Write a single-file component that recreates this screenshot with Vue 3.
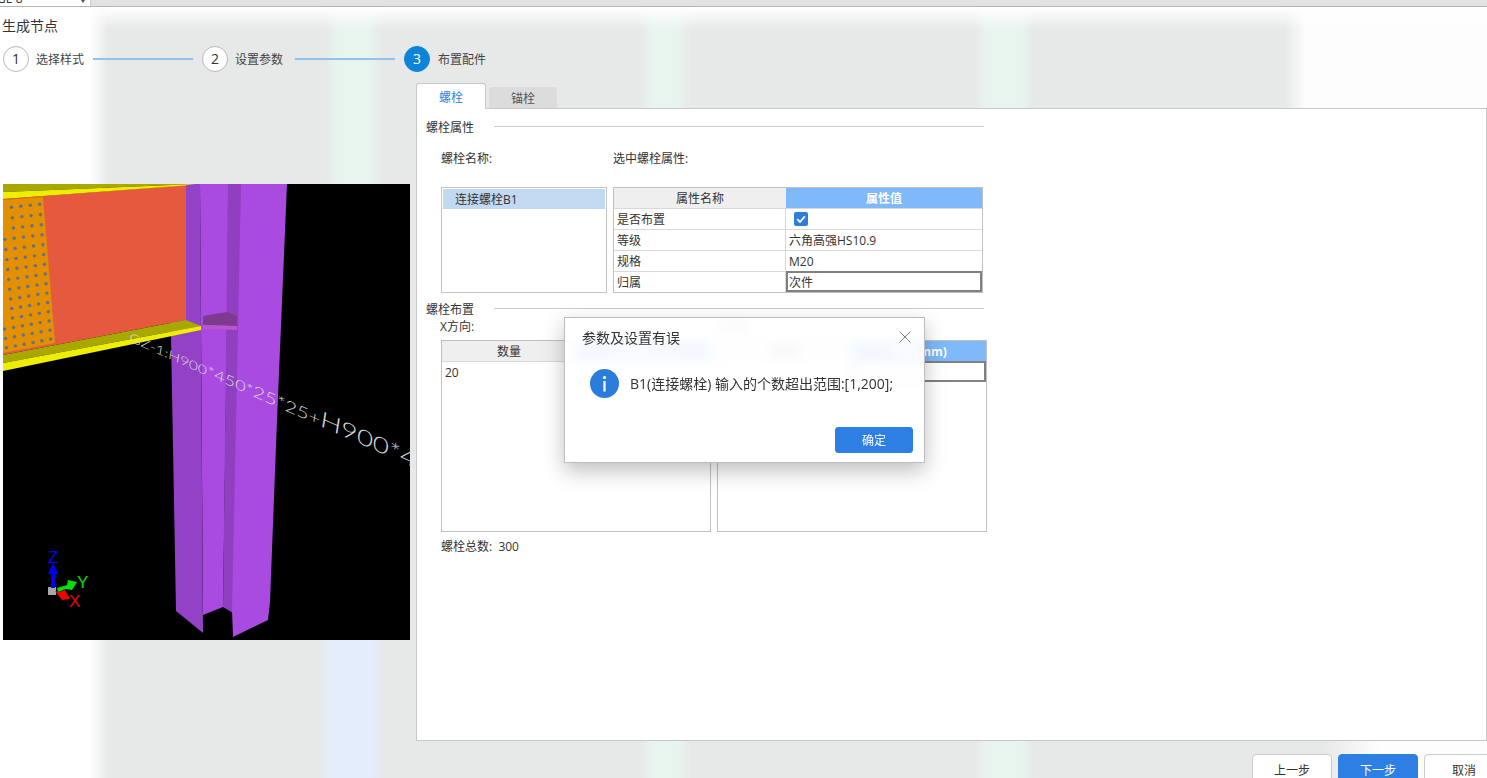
<template>
  <div class="page">
    <div class="top-bar">
      <div class="top-select">
        <span class="top-select-text">GL-8</span>
        <span class="top-caret"></span>
      </div>
    </div>

    <div class="title">生成节点</div>

    <div class="steps">
      <template v-for="(s, i) in steps" :key="s.label">
        <div class="step-num" :class="{ active: s.active }">{{ i + 1 }}</div>
        <div class="step-label">{{ s.label }}</div>
        <div v-if="i < steps.length - 1" class="step-line"></div>
      </template>
    </div>

    <div class="main">
      <div class="viewer-col">
        <svg class="viewer" viewBox="3 184 407 456" width="407" height="456">
          <rect x="3" y="184" width="407" height="456" fill="#000" />
          <!-- column -->
          <polygon points="170,184 200,184 203,633 176,611 171,337" fill="#9341c6" />
          <polygon points="200,184 229,184 223,607 203,615" fill="#a94ae0" />
          <polygon points="228,184 242,184 233,613 223,607" fill="#8f3fc0" />
          <polygon points="241,184 287,184 277,420 270,602 268,620 233,637 232,610" fill="#a94ae0" />
          <!-- notch -->
          <polygon points="203,316 227,312 237,316 237,326 203,325" fill="#7d3a8e" />
          <polygon points="203,325 237,326 237,330 203,329" fill="#b855d0" />
          <!-- beam -->
          <polygon points="3,199 186,185 186,320 3,355" fill="#e55a3f" />
          <polygon points="3,200 43,197 55,343 3,353" fill="#e28f00" />
          <circle v-for="(d, i) in dots" :key="i" :cx="d.x" :cy="d.y" r="1.7" fill="#60708c" />
          <polygon points="3,184 195,184 3,192" fill="#a8a800" />
          <polygon points="3,192 195,184 185,185.5 3,199" fill="#eeee00" />
          <polygon points="3,355 186,320 201,326 3,363" fill="#a8a800" />
          <polygon points="3,363 201,326 201,330 3,371" fill="#eeee00" />
          <!-- member label -->
          <text class="member" transform="translate(129,341) rotate(24) skewX(15) scale(1.3,0.9)"><tspan font-size="13">GZ-1:H900</tspan><tspan font-size="15">*450*</tspan><tspan font-size="17">25*25+</tspan><tspan font-size="23">H900*450</tspan></text>
          <!-- axis -->
          <rect x="48" y="587" width="8" height="8" fill="#a8a8a8" />
          <rect x="51" y="572" width="4" height="16" fill="#0000f0" />
          <polygon points="53,563 48,574 58,574" fill="#0000f0" />
          <polygon points="57,588 67,585 68,580 77,582 72,590 66,589 58,592" fill="#00e000" />
          <polygon points="55,591 59,592 65,590 70,599 62,600 58,595" fill="#f00000" />
          <text class="axis" x="48" y="563" fill="#0000f0">Z</text>
          <text class="axis" x="77" y="588" fill="#00e000">Y</text>
          <text class="axis" x="69" y="607" fill="#f00000">X</text>
        </svg>
      </div>

      <div class="right-col">
        <div class="tabs">
          <div class="tab active">螺栓</div>
          <div class="tab">锚栓</div>
        </div>
        <div class="panel">
          <div class="section-head">
            <span>螺栓属性</span>
            <i class="section-line"></i>
          </div>
          <div class="label-row">
            <span class="label-name">螺栓名称:</span>
            <span>选中螺栓属性:</span>
          </div>
          <div class="prop-row">
            <div class="bolt-list">
              <div class="bolt-item">连接螺栓B1</div>
            </div>
            <div class="grid-box">
              <table class="grid props">
                <thead>
                  <tr>
                    <th class="head-name">属性名称</th>
                    <th class="head-value">属性值</th>
                  </tr>
                </thead>
                <tbody>
                  <tr>
                    <td>是否布置</td>
                    <td>
                      <span class="check">
                        <svg viewBox="0 0 14 14" width="14" height="14">
                          <path d="M3.2 7.2 L6 10 L10.8 4.4" fill="none" stroke="#fff" stroke-width="1.8" />
                        </svg>
                      </span>
                    </td>
                  </tr>
                  <tr v-for="p in props" :key="p.name" >
                    <td>{{ p.name }}</td>
                    <td :class="{ focus: p.focus }">{{ p.value }}</td>
                  </tr>
                </tbody>
              </table>
            </div>
          </div>

          <div class="section-head second">
            <span>螺栓布置</span>
            <i class="section-line"></i>
          </div>
          <div class="dir-row">
            <span>X方向:</span>
            <span>Y方向:</span>
          </div>
          <div class="dir-tables">
            <div class="grid-box tall">
              <table class="grid dirs">
                <thead>
                  <tr>
                    <th class="head-name">数量</th>
                    <th class="head-value">间距(mm)</th>
                  </tr>
                </thead>
                <tbody>
                  <tr>
                    <td>20</td>
                    <td></td>
                  </tr>
                </tbody>
              </table>
            </div>
            <div class="grid-box tall">
              <table class="grid dirs">
                <thead>
                  <tr>
                    <th class="head-name">数量</th>
                    <th class="head-value">间距(mm)</th>
                  </tr>
                </thead>
                <tbody>
                  <tr>
                    <td></td>
                    <td class="focus"></td>
                  </tr>
                </tbody>
              </table>
            </div>
          </div>
          <div class="total">螺栓总数:&nbsp; 300</div>
        </div>
      </div>
    </div>

    <div class="footer">
      <button class="btn">上一步</button>
      <button class="btn primary">下一步</button>
      <button class="btn">取消</button>
    </div>

    <div class="dialog">
      <div class="dialog-head">
        <span>参数及设置有误</span>
        <svg viewBox="0 0 12 12" width="12" height="12">
          <path d="M0.5 0.5 L11.5 11.5 M11.5 0.5 L0.5 11.5" stroke="#808080" stroke-width="1" fill="none" />
        </svg>
      </div>
      <div class="dialog-body">
        <svg viewBox="0 0 29 29" width="29" height="29">
          <circle cx="14.5" cy="14.5" r="14.5" fill="#2b7cdb" />
          <circle cx="14.5" cy="8.5" r="1.6" fill="#fff" />
          <rect x="13.4" y="12" width="2.2" height="10.5" fill="#fff" />
        </svg>
        <span>B1(连接螺栓) 输入的个数超出范围:[1,200];</span>
      </div>
      <div class="dialog-foot">
        <button class="btn primary ok">确定</button>
      </div>
    </div>
  </div>
</template>

<script setup>
const steps = [
  { label: '选择样式' },
  { label: '设置参数' },
  { label: '布置配件', active: true }
];

const props = [
  { name: '等级', value: '六角高强HS10.9' },
  { name: '规格', value: 'M20' },
  { name: '归属', value: '次件', focus: true }
];

// bolt holes on the beam plate, perspective closes them up going down
const dots = [];
for (let row = 0; row < 15; row++) {
  for (let col = 0; col < 6; col++) {
    const x = 39.7 + row * 0.79 - col * (9.4 - row * 0.04);
    const y = 204.3 + row * 10.3 - row * row * 0.048 + col * (1 + row * 0.05);
    if (x > 4) dots.push({ x, y });
  }
}
</script>

<style>
html, body {
  margin: 0;
  overflow: hidden;
}
</style>

<style scoped>
.page {
  position: relative;
  width: 100vw;
  height: 100vh;
  overflow: hidden;
  font-family: "Open Sans", "Noto Sans CJK SC", sans-serif;
  font-size: 12px;
  color: #333;
  background-color: #e7e8e8;
  background-image:
    linear-gradient(to bottom, #fff 7px, rgba(255, 255, 255, 0) 30px),
    linear-gradient(90deg, #fff 90px, #e7e8e8 108px, #e7e8e8 325px, #e8f4ee 338px, #e8f4ee 370px, #e7e8e8 382px, #e7e8e8 640px, #e8f4ee 652px, #e8f4ee 678px, #e7e8e8 692px, #e7e8e8 975px, #e8f4ee 985px, #e8f4ee 1022px, #e7e8e8 1034px, #e7e8e8 1285px, #fdfdfe 1306px),
    linear-gradient(90deg, #fff 90px, #e7e8e8 108px, #e7e8e8 318px, #e3edfb 330px, #e3edfb 372px, #e7e8e8 384px, #e7e8e8 640px, #e8f4ee 652px, #e8f4ee 678px, #e7e8e8 692px, #e7e8e8 975px, #e8f4ee 985px, #e8f4ee 1022px, #e7e8e8 1034px, #e7e8e8 1322px, #fdfdfe 1380px);
  background-repeat: no-repeat;
  background-size: 100% 100%, 100% 400px, 100% 378px;
  background-position: 0 0, 0 0, 0 400px;
}

.top-bar {
  height: 6px;
  background: #e2e2e2;
  border-bottom: 1px solid #b5b5b5;
  overflow: hidden;
}

.top-select {
  width: 90px;
  height: 6px;
  display: flex;
  justify-content: space-between;
  background: #fff;
  border-right: 1px solid #ccc;
  overflow: hidden;
}

.top-select-text {
  margin: -9px 0 0 -3px;
  line-height: 16px;
  font-size: 12px;
}

.top-caret {
  width: 0;
  height: 0;
  margin: 0 5px 0 0;
  border-left: 2px solid transparent;
  border-right: 2px solid transparent;
  border-top: 3px solid #555;
}

.title {
  height: 39px;
  padding-left: 2px;
  line-height: 38px;
  font-size: 14px;
}

.steps {
  display: flex;
  align-items: center;
  height: 26px;
  padding-left: 3px;
}

.step-num {
  box-sizing: border-box;
  width: 26px;
  height: 26px;
  border: 1px solid #b8b8b8;
  border-radius: 50%;
  text-align: center;
  line-height: 24px;
  font-size: 14px;
  background: #fff;
}

.step-num.active {
  border-color: #0b84d9;
  background: #0b84d9;
  color: #fff;
}

.step-label {
  margin-left: 7px;
  width: 48px;
  color: #444;
}

.step-label:nth-child(8) {
  margin-left: 8px;
}

.step-line {
  width: 100px;
  height: 2px;
  margin: 0 9px;
  background: #90c3ee;
}

.step-line:nth-child(6) {
  margin-left: 12px;
}

.main {
  display: flex;
  height: 658px;
  margin-top: 11px;
}

.viewer-col {
  width: 416px;
  flex-shrink: 0;
  box-sizing: border-box;
  padding: 101px 0 0 3px;
}

.viewer {
  display: block;
}

.member {
  font-family: "Lato", "Liberation Sans", sans-serif;
  font-weight: 300;
  fill: #d8d8d8;
}

.axis {
  font-family: "Liberation Sans", sans-serif;
  font-size: 17px;
}

.right-col {
  flex: 1;
  display: flex;
  flex-direction: column;
  min-width: 0;
}

.tabs {
  display: flex;
  align-items: flex-end;
  gap: 3px;
  height: 25px;
}

.tab {
  width: 68px;
  height: 21px;
  border-radius: 3px 3px 0 0;
  background: #dcdcdc;
  text-align: center;
  line-height: 24px;
  color: #555;
}

.tab.active {
  position: relative;
  z-index: 1;
  box-sizing: border-box;
  width: 70px;
  height: 26px;
  margin-bottom: -1px;
  border: 1px solid #c5c8cc;
  border-bottom: 0;
  background: #fff;
  color: #2f7fe0;
  line-height: 27px;
}

.panel {
  flex: 1;
  box-sizing: border-box;
  padding: 8px 0 0 9px;
  border: 1px solid #c5c8cc;
  background: #fff;
}

.section-head {
  display: flex;
  align-items: center;
  gap: 20px;
  width: 558px;
  height: 20px;
}

.section-head.second {
  margin-top: 6px;
}

.section-line {
  flex: 1;
  height: 1px;
  margin-top: -1px;
  background: #ccc;
}

.label-row {
  display: flex;
  height: 20px;
  margin: 11px 0 0 15px;
  line-height: 22px;
}

.label-name {
  width: 172px;
}

.prop-row {
  display: flex;
  gap: 6px;
  margin: 19px 0 0 15px;
}

.bolt-list {
  box-sizing: border-box;
  width: 166px;
  height: 106px;
  padding: 1px;
  border: 1px solid #c4c4c4;
}

.bolt-item {
  height: 20px;
  padding-left: 12px;
  background: #c2d9f2;
  line-height: 22px;
}

.grid-box {
  box-sizing: border-box;
  width: 370px;
  height: 106px;
  border: 1px solid #c0c0c0;
}

.grid-box.tall {
  width: 270px;
  height: 192px;
}

.grid {
  width: 100%;
  table-layout: fixed;
  border-collapse: separate;
  border-spacing: 0;
}

.grid th {
  box-sizing: border-box;
  height: 20px;
  padding: 0;
  font-weight: 400;
  text-align: center;
}

.props th:first-child {
  width: 172px;
}

.dirs th:first-child {
  width: 134px;
}

.head-name {
  background: #efefef;
}

.grid th.head-value {
  background: #7fb9fa;
  color: #fff;
  font-weight: 700;
}

.grid td {
  box-sizing: border-box;
  height: 21px;
  padding: 1px 0 0 3px;
  border-top: 1px solid #d8d8d8;
  line-height: 19px;
}

.grid td:first-child {
  border-right: 1px solid #d8d8d8;
}

.grid td.focus {
  border-top: 0;
  box-shadow: inset 0 0 0 2px #808080;
}

.check {
  display: block;
  width: 14px;
  height: 14px;
  margin: -1px 0 0 5px;
  border-radius: 2px;
  background: #2e7de1;
}

.check svg {
  display: block;
}

.dir-row {
  display: flex;
  height: 20px;
  margin: -3px 0 0 14px;
  line-height: 22px;
}

.dir-row span {
  width: 277px;
}

.dir-tables {
  display: flex;
  gap: 6px;
  margin: 4px 0 0 15px;
}

.total {
  height: 20px;
  margin: 4px 0 0 15px;
  line-height: 22px;
}

.footer {
  display: flex;
  justify-content: flex-end;
  gap: 6px;
  margin: 13px -17px 0 0;
}

.btn {
  box-sizing: border-box;
  width: 80px;
  height: 32px;
  flex-shrink: 0;
  border: 1px solid #ccc;
  border-radius: 4px;
  background: #fff;
  color: #333;
  font-family: inherit;
  font-size: 12px;
}

.btn.primary {
  border-color: #2e7fe3;
  background: #2e7fe3;
  color: #fff;
}

.dialog {
  position: absolute;
  left: 564px;
  top: 317px;
  box-sizing: border-box;
  width: 361px;
  height: 146px;
  border: 1px solid #bdbdbd;
  background: rgba(255, 255, 255, 0.9);
  backdrop-filter: blur(6px);
  box-shadow: 0 8px 20px rgba(0, 0, 0, 0.25);
}

.dialog-head {
  display: flex;
  justify-content: space-between;
  align-items: center;
  height: 38px;
  padding: 0 13px 0 17px;
  font-size: 14px;
}

.dialog-body {
  display: flex;
  align-items: center;
  gap: 11px;
  height: 30px;
  margin-top: 12px;
  padding-left: 25px;
  font-size: 14px;
}

.dialog-foot {
  display: flex;
  justify-content: flex-end;
  margin-top: 29px;
  padding-right: 11px;
}

.btn.ok {
  width: 78px;
  height: 26px;
  border-radius: 3px;
}
</style>
